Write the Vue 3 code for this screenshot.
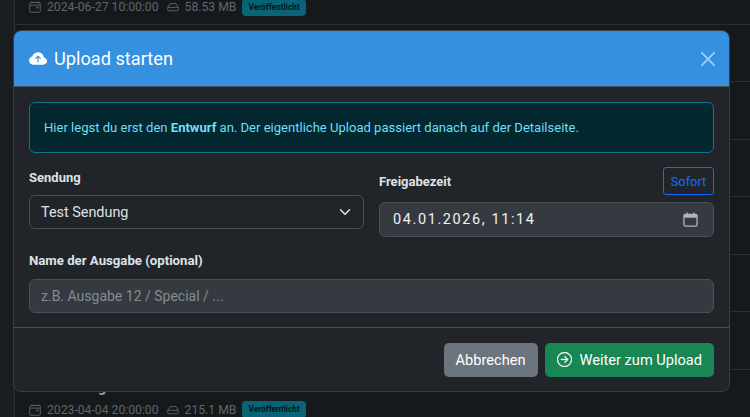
<script setup>
const rows = [
  { date: '2024-06-27 10:00:00', size: '58.53 MB' },
  {}, {}, {}, {}, {}, {},
  { title: '#124 · Ausgabe 2023-04-04 TEAM', date: '2023-04-04 20:00:00', size: '215.1 MB' }
]
</script>

<template>
  <div class="page">
    <div class="list">
      <div v-for="(r, i) in rows" :key="i" class="row">
        <div v-if="r.title" class="title">{{ r.title }}</div>
        <div v-if="r.date" class="meta">
          <svg class="mi" viewBox="0 0 16 16" fill="none" stroke="currentColor" stroke-width="1.200"><rect x="1" y="2" width="14" height="13" rx="1.500"/><path d="M1 5.500h14M4 .5v2.500M12 .5v2.500"/><rect x="10" y="7.500" width="2.500" height="2.500" fill="currentColor" stroke="none"/></svg>
          <span class="date">{{ r.date }}</span>
          <svg class="mi drive" viewBox="0 0 16 16" fill="none" stroke="currentColor" stroke-width="1.200"><path d="M4 3.500h8l3 5v3a1.500 1.500 0 0 1-1.500 1.500h-11A1.500 1.500 0 0 1 1 11.500v-3zM1 8.500h14"/></svg>
          <span class="size">{{ r.size }}</span>
          <span class="badge">Veröffentlicht</span>
        </div>
      </div>
    </div>

    <section class="modal">
      <header class="mhead">
        <h5>
          <svg class="cloud" viewBox="0 0 16 16" fill="currentColor"><path d="M8 2a5.530 5.530 0 0 0-3.594 1.342c-.766.66-1.321 1.520-1.464 2.383C1.266 6.095 0 7.555 0 9.318 0 11.366 1.708 13 3.781 13h8.906C14.502 13 16 11.570 16 9.773c0-1.636-1.242-2.969-2.834-3.194C12.923 3.999 10.690 2 8 2zm2.354 5.146a.5.5 0 0 1-.708.708L8.500 6.707V10.500a.5.5 0 0 1-1 0V6.707L6.354 7.854a.5.5 0 1 1-.708-.708l2-2a.5.5 0 0 1 .708 0l2 2z"/></svg>
          Upload starten
        </h5>
        <button class="close" aria-label="Schließen"><svg viewBox="0 0 16 16" fill="currentColor"><path d="M.293.293a1 1 0 0 1 1.414 0L8 6.586 14.293.293a1 1 0 1 1 1.414 1.414L9.414 8l6.293 6.293a1 1 0 0 1-1.414 1.414L8 9.414l-6.293 6.293a1 1 0 0 1-1.414-1.414L6.586 8 .293 1.707a1 1 0 0 1 0-1.414z"/></svg></button>
      </header>
      <div class="mbody">
        <div class="alert"><span>Hier legst du erst den <b>Entwurf</b> an. Der eigentliche Upload passiert danach auf der Detailseite.</span></div>
        <div class="cols">
          <div class="col">
            <div class="lab-row"><label>Sendung</label></div>
            <div class="field plain">
              <span>Test Sendung</span>
              <svg class="chev" viewBox="0 0 16 16" fill="none" stroke="currentColor" stroke-width="2" stroke-linecap="round" stroke-linejoin="round"><path d="m2 5 6 6 6-6"/></svg>
            </div>
          </div>
          <div class="col">
            <div class="lab-row between"><label>Freigabezeit</label><button class="sofort">Sofort</button></div>
            <div class="field filled dt">
              <span class="dtv">04.01.2026, 11:14</span>
              <svg class="cal" viewBox="0 0 16 16" fill="none" stroke="currentColor" stroke-width="1.400"><rect x="1" y="2.500" width="14" height="12.500" rx="1.500"/><path d="M1 4.500h14" stroke-width="3"/><path d="M4.500 .5v2.500M11.500 .5v2.500"/></svg>
            </div>
          </div>
        </div>
        <label class="name-lab">Name der Ausgabe (optional)</label>
        <div class="field filled ph">z.B. Ausgabe 12 / Special / ...</div>
      </div>
      <footer class="mfoot">
        <button class="btn grey">Abbrechen</button>
        <button class="btn green">
          <svg viewBox="0 0 16 16" fill="currentColor" stroke="currentColor" stroke-width=".4"><path d="M1 8a7 7 0 1 0 14 0A7 7 0 0 0 1 8zm15 0A8 8 0 1 1 0 8a8 8 0 0 1 16 0zM4.500 7.500a.5.5 0 0 0 0 1h5.793l-2.147 2.146a.5.5 0 0 0 .708.708l3-3a.5.5 0 0 0 0-.708l-3-3a.5.5 0 1 0-.708.708L10.293 7.500H4.500z"/></svg>
          Weiter zum Upload
        </button>
      </footer>
    </section>
  </div>
</template>

<style>
html, body { margin: 0; background: #16191c; overflow: hidden; }
</style>

<style scoped>
.page { position: relative; width: 750px; height: 417px; overflow: hidden; background: #1b1e21; font-family: Roboto, "Noto Sans", sans-serif; color: #dee2e6; }
.list { margin-left: 14px; border-left: 1px solid #2c2f33; height: 480px; margin-top: -33px; background: #16191c; }
.row { height: 57.500px; box-sizing: border-box; border-bottom: 1px solid #2b2e32; position: relative; }
.meta { position: absolute; left: 14px; top: 32px; display: flex; align-items: center; height: 16px; font-size: 12.200px; color: #5f656b; }
.date { margin-left: 6px; }
.size { margin-left: 6px; }
.mi { width: 12px; height: 12px; flex: none; }
.drive { margin-left: 8px; }
.badge { margin-left: 6px; background: #0a6478; color: #05141a; font-size: 8.300px; font-weight: 700; border-radius: 4px; padding: 3px 6px; line-height: 11px; }
.title { position: absolute; left: 15px; top: 9px; font-size: 14px; font-weight: 700; color: #a0a5aa; white-space: nowrap; }

.modal { position: absolute; left: 13px; top: 30px; width: 717px; height: 362px; box-sizing: border-box; background: #212529; border: 1px solid #3a3e43; border-radius: 8px; display: flex; flex-direction: column; overflow: hidden; }
.mhead { height: 56px; flex: none; box-sizing: border-box; background: #3590e0; border-bottom: 1px solid #4b5157; display: flex; align-items: center; justify-content: space-between; padding: 0 14px 0 15px; color: #fff; }
h5 { margin: 0; font-size: 18.200px; font-weight: 400; display: flex; align-items: center; gap: 7px; }
.cloud { width: 18px; height: 18px; }
.close { background: none; border: 0; padding: 0; width: 14px; height: 14px; color: #a6cdf0; display: flex; }
.close svg { width: 14px; height: 14px; }
.mbody { padding: 15px 15px 0; flex: 1; }
.alert { height: 51px; box-sizing: border-box; display: flex; align-items: center; padding: 0 14px; font-size: 13.050px; color: #6edff6; background: #032830; border: 1px solid #087990; border-radius: 6px; }
.cols { display: flex; gap: 15px; margin-top: 14px; }
.col { flex: 1; min-width: 0; }
.lab-row { display: flex; align-items: center; height: 28px; margin-bottom: 7px; }
.col:first-child .lab-row { height: 21px; }
.between { justify-content: space-between; }
label { font-size: 13px; font-weight: 700; color: #dee2e6; }
.sofort { background: none; border: 1px solid #0d6efd; color: #0d6efd; border-radius: 3px; height: 28px; width: 51px; padding: 0; font: inherit; font-size: 12.800px; }
.field { box-sizing: border-box; border: 1px solid #495057; border-radius: 6px; font-size: 14.400px; color: #dee2e6; display: flex; align-items: center; padding: 0 11px; }
.plain { height: 34px; justify-content: space-between; }
.chev { width: 12px; height: 12px; color: #dee2e6; margin-right: 1px; }
.filled { background: #343a40; }
.dt { height: 35px; justify-content: space-between; padding-left: 13px; padding-right: 15px; }
.dtv { font-size: 14.500px; letter-spacing: 1.600px; color: #f0f2f4; }
.cal { width: 15px; height: 15px; color: #b0b4b8; }
.name-lab { display: block; font-size: 13.200px; margin-top: 15px; margin-bottom: 9px; line-height: 18px; }
.ph { height: 34px; color: #858b91; font-size: 14px; }
.mfoot { border-top: 1px solid #4b5157; height: 64px; flex: none; box-sizing: border-box; display: flex; justify-content: flex-end; align-items: center; gap: 7px; padding: 0 15px 0; }
.btn { border: 0; height: 34px; border-radius: 5px; color: #fff; font: inherit; font-size: 14.600px; padding: 0 12px; display: flex; align-items: center; gap: 8px; }
.btn svg { width: 15px; height: 15px; }
.grey { background: #6c757d; }
.green { background: #198754; }
</style>
